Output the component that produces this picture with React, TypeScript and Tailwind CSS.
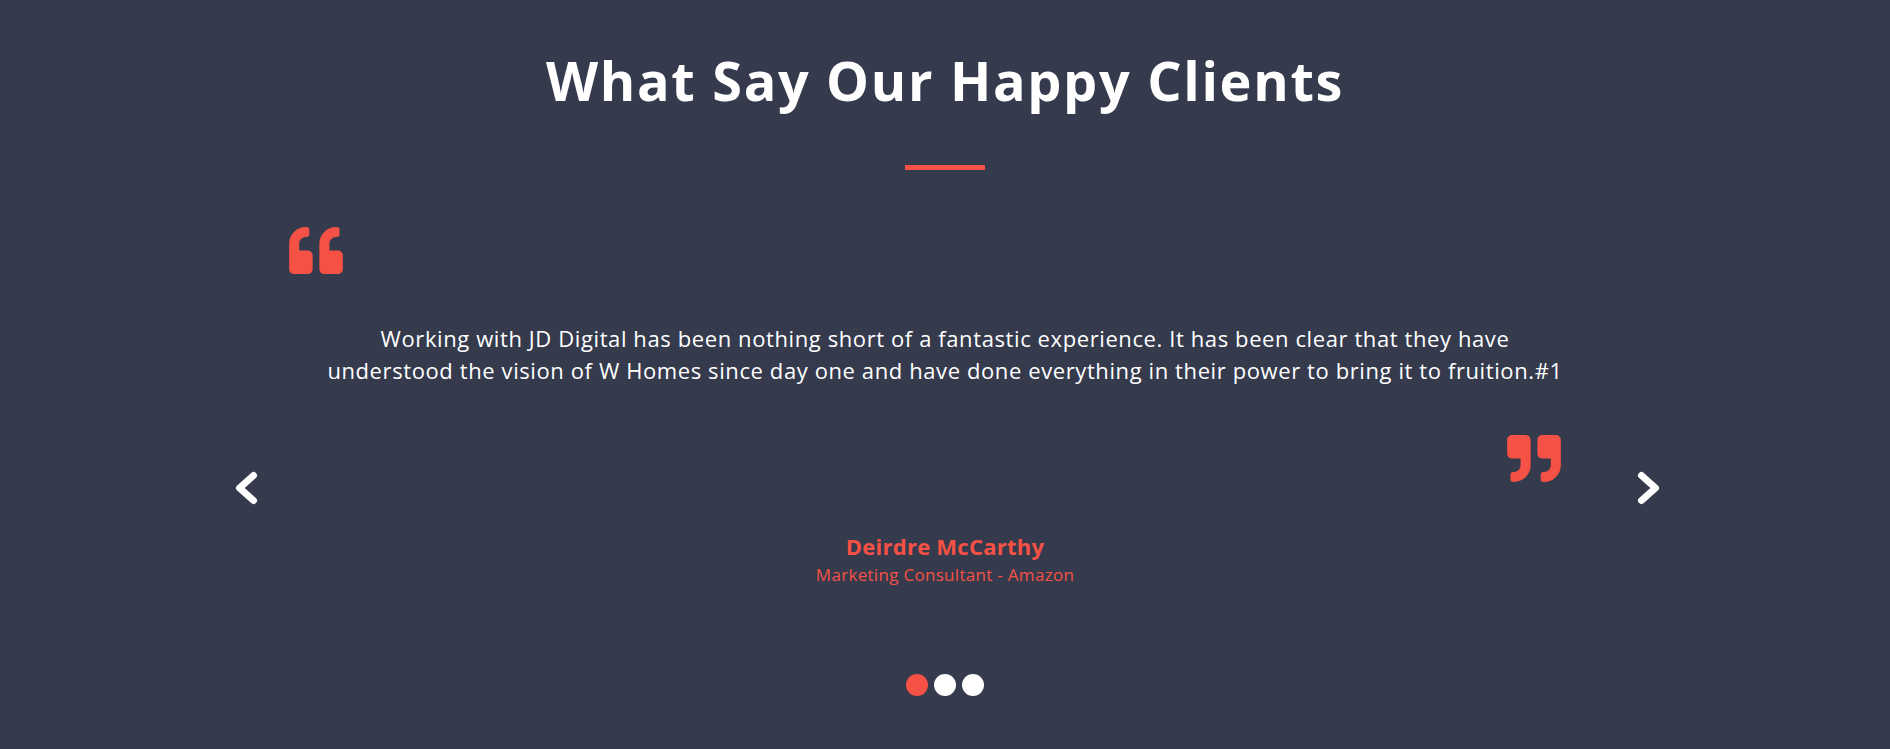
import { ReactNode } from "react";

const RED = "#f65145";

function QuoteLeft() {
  return (
    <svg viewBox="0 32 512 448" className="w-[54px] h-[47px]" fill={RED}>
      <path d="M464 256h-80v-64c0-35.3 28.7-64 64-64h8c13.3 0 24-10.7 24-24V56c0-13.3-10.7-24-24-24h-8c-88.4 0-160 71.6-160 160v240c0 26.5 21.5 48 48 48h128c26.5 0 48-21.5 48-48V304c0-26.5-21.5-48-48-48zm-288 0H96v-64c0-35.3 28.7-64 64-64h8c13.3 0 24-10.7 24-24V56c0-13.3-10.7-24-24-24h-8C71.6 32 0 103.6 0 192v240c0 26.5 21.5 48 48 48h128c26.5 0 48-21.5 48-48V304c0-26.5-21.5-48-48-48z" />
    </svg>
  );
}

function QuoteRight() {
  return (
    <svg viewBox="0 32 512 448" className="w-[54px] h-[47px]" fill={RED}>
      <path d="M464 32H336c-26.5 0-48 21.5-48 48v128c0 26.5 21.5 48 48 48h80v64c0 35.3-28.7 64-64 64h-8c-13.3 0-24 10.7-24 24v48c0 13.3 10.7 24 24 24h8c88.4 0 160-71.6 160-160V80c0-26.5-21.5-48-48-48zm-288 0H48C21.5 32 0 53.5 0 80v128c0 26.5 21.5 48 48 48h80v64c0 35.3-28.7 64-64 64h-8c-13.3 0-24 10.7-24 24v48c0 13.3 10.7 24 24 24h8c88.4 0 160-71.6 160-160V80c0-26.5-21.5-48-48-48z" />
    </svg>
  );
}

function Arrow({ dir }: { dir: "left" | "right" }) {
  const pts = dir === "left" ? "18.5,5.5 4.5,18 18.5,30.5" : "5.5,5.5 19.5,18 5.5,30.5";
  return (
    <button className="mt-[243px] shrink-0 w-6 h-9 cursor-pointer" aria-label={dir}>
      <svg viewBox="0 0 24 36" className="w-6 h-9" fill="none" stroke="#ffffff" strokeWidth={7} strokeLinecap="round" strokeLinejoin="round">
        <polyline points={pts} />
      </svg>
    </button>
  );
}

function Dot({ active, children }: { active?: boolean; children?: ReactNode }) {
  return <span className={active ? "w-[22px] h-[22px] rounded-full bg-[#f65145]" : "w-[22px] h-[22px] rounded-full bg-white"}>{children}</span>;
}

export default function App() {
  return (
    <section className="w-full h-[749px] bg-[#353a4d] overflow-hidden font-['Open_Sans',sans-serif]">
      <h2 className="pt-[53px] text-center text-white text-[54px] leading-none font-bold tracking-[1.7px]">
        What Say Our Happy Clients
      </h2>
      <div className="mt-[58px] mx-auto w-20 h-[5px] bg-[#f65145]" />

      <div className="mt-[57px] flex justify-center items-start pl-[5px]">
        <Arrow dir="left" />
        <div className="ml-[30px] mr-[35px] w-[1312px] flex flex-col">
          <div className="flex">
            <QuoteLeft />
          </div>
          <p className="mt-[48px] text-center text-white text-[22px] leading-[32px] tracking-[0.6px]">
            Working with JD Digital has been nothing short of a fantastic experience. It has been clear that they have
            <br />
            understood the vision of W Homes since day one and have done everything in their power to bring it to fruition.#1
          </p>
          <div className="mt-[49px] flex justify-end pr-[40px]">
            <QuoteRight />
          </div>
          <div className="mt-[53px] flex flex-col items-center">
            <h4 className="text-[22px] leading-none font-bold tracking-[0.25px] text-[#f65145]">Deirdre McCarthy</h4>
            <p className="mt-[9px] text-[17px] leading-none tracking-[0.3px] text-[#f65145]">Marketing Consultant - Amazon</p>
          </div>
        </div>
        <Arrow dir="right" />
      </div>

      <div className="mt-[91px] flex justify-center gap-[6px]">
        <Dot active />
        <Dot />
        <Dot />
      </div>
    </section>
  );
}
